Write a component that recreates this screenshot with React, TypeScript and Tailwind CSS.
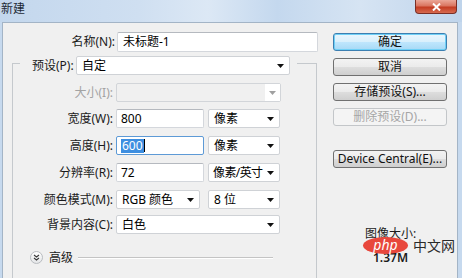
import React from 'react';

function Arrow({ gray }: { gray?: boolean }) {
    return (
        <svg width="7" height="4" viewBox="0 0 7 4" className="shrink-0">
            <path d="M0 0h7L3.5 4z" fill={gray ? '#a0a0a0' : '#111'} />
        </svg>
    );
}

function Combo({ text, w, tight }: { text: string; w: string; tight?: boolean }) {
    return (
        <div className={`${w} h-[19px] flex items-center justify-between bg-white border border-[#cfd2d6] rounded-[2px] ${tight ? 'pl-[4px]' : 'pl-[5px]'} pr-[5px]`}>
            <span className={`leading-none ${tight ? 'tracking-[-0.6px]' : ''}`}>{text}</span>
            <Arrow />
        </div>
    );
}

function TextBox({ children, w, focus }: { children: React.ReactNode; w: string; focus?: boolean }) {
    return (
        <div className={`${w} h-[19px] flex items-center bg-white border rounded-[2px] pl-[4px] ${focus ? 'border-[#5d9ad6]' : 'border-[#d4d7dc] border-t-[#b5b9bf]'}`}>
            {children}
        </div>
    );
}

function Label({ text, w, gray }: { text: string; w: string; gray?: boolean }) {
    return (
        <span className={`${w} text-right leading-none ${gray ? 'text-[#a3a3a3]' : 'text-[#1b1b1b]'}`}>{text}</span>
    );
}

function Btn({ text, kind }: { text: string; kind?: 'default' | 'disabled' }) {
    let cls = 'border-[#707070] bg-[linear-gradient(#f3f3f3_0%,#ebebeb_48%,#dddddd_52%,#cfcfcf_100%)] text-[#111]';
    if (kind === 'default') {
        cls = 'border-[#3c7fb1] bg-[linear-gradient(#eaf6fd_0%,#d9f0fc_48%,#bee6fd_52%,#a7d9f5_100%)] shadow-[inset_0_0_0_1px_#6fd0f6] text-[#111]';
    }
    if (kind === 'disabled') {
        cls = 'border-[#c3c6c9] bg-[#f4f4f4] text-[#a6a6a6]';
    }
    return (
        <div className={`w-[114px] h-[18px] border rounded-[3px] flex items-center justify-center leading-none ${cls}`}>
            {text}
        </div>
    );
}

export default function App() {
    return (
        <div className="relative w-[462px] h-[278px] overflow-hidden flex flex-col bg-[#c6d9ee] text-[12px] font-['Noto_Sans','Noto_Sans_CJK_SC',sans-serif]">
            {/* title bar */}
            <div className="h-[22px] shrink-0 flex justify-between bg-[linear-gradient(90deg,#c3d7ed_0%,#cfdff1_30%,#dce8f5_45%,#c4d8ee_60%,#d6e4f3_78%,#bfd4eb_100%)]">
                <span className="pl-[1px] pt-[3px] leading-none text-[#1e2a36] text-[12px]">新建</span>
                <div className="mr-[5px] w-[42px] h-[14px] rounded-b-[4px] border border-t-0 border-[#7a2f26] bg-[linear-gradient(#eba797_0%,#da7560_45%,#c43c22_55%,#d66a4f_100%)] flex items-center justify-center">
                    <svg width="9" height="8" viewBox="0 0 9 8">
                        <path d="M1 0.5l7 7M8 0.5l-7 7" stroke="#fff" strokeWidth="2" />
                    </svg>
                </div>
            </div>

            {/* body */}
            <div className="flex-1 flex ml-[2px] mr-[4px] bg-[#f0f0f0] border-l border-t border-r border-[#a3b4c6]">
                {/* left column */}
                <div className="w-[320px] flex flex-col">
                    <div className="mt-[9px] flex items-center h-[20px]">
                        <Label text="名称(N):" w="w-[112px]" />
                        <div className="ml-[2px] w-[201px] h-[20px] flex items-center bg-white border border-[#d4d7dc] border-t-[#b5b9bf] rounded-[2px] pl-[5px]">
                            未标题-1
                        </div>
                    </div>

                    <div className="mt-[11px] ml-[9px] w-[305px] flex-1 border-l border-t border-r border-[#c5c9cd]">
                        {/* preset (legend) */}
                        <div className="-mt-[8px] ml-[7px] w-[277px] h-[19px] bg-[#f0f0f0] flex items-center pl-[12px]">
                            <span className="w-[44px] leading-none text-[#1b1b1b]">预设(P):</span>
                            <Combo text="自定" w="w-[214px]" />
                        </div>

                        <div className="mt-[8px] flex items-center">
                            <Label text="大小(I):" w="w-[100px]" gray />
                            <div className="ml-[3px] w-[165px] h-[19px] flex items-center justify-end bg-[#f0f0f0] border border-[#d2d5d9] rounded-[2px]">
                                <div className="w-[15px] h-full bg-white flex items-center justify-center">
                                    <Arrow gray />
                                </div>
                            </div>
                        </div>

                        <div className="mt-[7px] flex items-center">
                            <Label text="宽度(W):" w="w-[100px]" />
                            <div className="ml-[3px]"><TextBox w="w-[88px]">800</TextBox></div>
                            <div className="ml-[4px]"><Combo text="像素" w="w-[72px]" /></div>
                        </div>

                        <div className="mt-[8px] flex items-center">
                            <Label text="高度(H):" w="w-[100px]" />
                            <div className="ml-[3px]">
                                <TextBox w="w-[88px]" focus>
                                    <span className="bg-[#3d8ee0] text-white leading-[14px] px-[1px]">600</span>
                                    <span className="w-[1px] h-[13px] bg-black" />
                                </TextBox>
                            </div>
                            <div className="ml-[4px]"><Combo text="像素" w="w-[72px]" /></div>
                        </div>

                        <div className="mt-[8px] flex items-center">
                            <Label text="分辨率(R):" w="w-[100px]" />
                            <div className="ml-[3px]"><TextBox w="w-[88px]">72</TextBox></div>
                            <div className="ml-[4px]"><Combo text="像素/英寸" w="w-[72px]" tight /></div>
                        </div>

                        <div className="mt-[8px] flex items-center">
                            <Label text="颜色模式(M):" w="w-[100px]" />
                            <div className="ml-[3px]"><Combo text="RGB 颜色" w="w-[84px]" /></div>
                            <div className="ml-[8px]"><Combo text="8 位" w="w-[72px]" /></div>
                        </div>

                        <div className="mt-[6px] flex items-center">
                            <Label text="背景内容(C):" w="w-[100px]" />
                            <div className="ml-[3px]"><Combo text="白色" w="w-[164px]" /></div>
                        </div>

                        <div className="mt-[17px] ml-[17px] flex items-center h-[13px]">
                            <div className="w-[13px] h-[13px] rounded-full border border-[#b9bcc0] bg-[linear-gradient(#ffffff,#e4e6e8)] flex items-center justify-center">
                                <svg width="7" height="7" viewBox="0 0 7 7">
                                    <path d="M1 1l2.5 2 2.5-2M1 4l2.5 2 2.5-2" stroke="#3a3a3a" strokeWidth="1.1" fill="none" />
                                </svg>
                            </div>
                            <span className="ml-[6px] leading-none text-[#1b1b1b]">高级</span>
                            <div className="ml-[5px] w-[195px] h-[2px] border-t border-[#c4c4c4] border-b border-b-white" />
                        </div>
                    </div>
                </div>

                {/* right column */}
                <div className="flex-1 flex flex-col">
                    <div className="ml-[10px] mt-[10px] flex flex-col gap-[7px]">
                        <Btn text="确定" kind="default" />
                        <Btn text="取消" />
                        <Btn text="存储预设(S)..." />
                        <Btn text="删除预设(D)..." kind="disabled" />
                    </div>
                    <div className="ml-[10px] mt-[24px]">
                        <Btn text="Device Central(E)..." />
                    </div>
                    <div className="ml-[42px] mt-[60px] leading-none text-[#1b1b1b]">图像大小:</div>
                    <div className="ml-[50px] mt-[12px] leading-none font-semibold text-[#1b1b1b]">1.37M</div>
                </div>
            </div>

            {/* watermark */}
            <div className="absolute left-[363px] top-[237px] flex items-center">
                <div className="w-[45px] h-[17px] rounded-[50%] bg-[#e8473c] flex items-center justify-center">
                    <span className="text-white italic text-[14px] leading-none pb-[2px]">php</span>
                </div>
                <span className="ml-[5px] text-[14px] leading-none text-[#2a2a2a]">中文网</span>
            </div>
        </div>
    );
}
